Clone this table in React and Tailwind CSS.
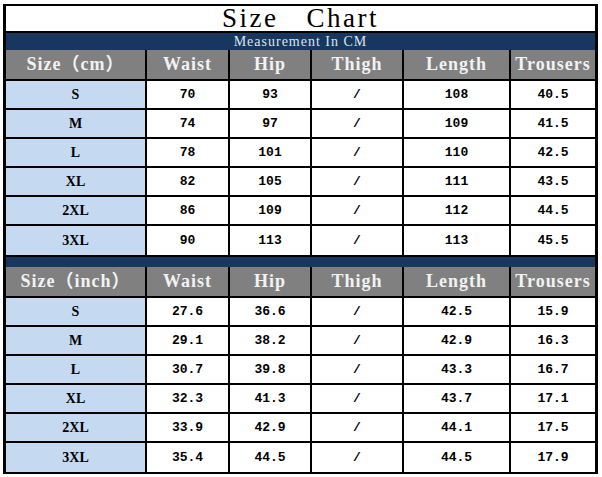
import React from "react";

const cm = [
  ["S", "70", "93", "/", "108", "40.5"],
  ["M", "74", "97", "/", "109", "41.5"],
  ["L", "78", "101", "/", "110", "42.5"],
  ["XL", "82", "105", "/", "111", "43.5"],
  ["2XL", "86", "109", "/", "112", "44.5"],
  ["3XL", "90", "113", "/", "113", "45.5"],
];

const inch = [
  ["S", "27.6", "36.6", "/", "42.5", "15.9"],
  ["M", "29.1", "38.2", "/", "42.9", "16.3"],
  ["L", "30.7", "39.8", "/", "43.3", "16.7"],
  ["XL", "32.3", "41.3", "/", "43.7", "17.1"],
  ["2XL", "33.9", "42.9", "/", "44.1", "17.5"],
  ["3XL", "35.4", "44.5", "/", "44.5", "17.9"],
];

const widths = ["w-[141px]", "w-[83px]", "w-[82px]", "w-[92px]", "w-[107px]", "w-[84px]"];

const serif = '"Liberation Serif", "Noto Sans CJK SC", serif';
const mono = '"Liberation Mono", monospace';

function HeaderRow({ first }) {
  const labels = [first, "Waist", "Hip", "Thigh", "Length", "Trousers"];
  return (
    <div className="flex h-[31px] bg-[#808080] border-b-2 border-black">
      {labels.map((l, i) => (
        <div
          key={i}
          className={`${widths[i]} flex items-center justify-center text-[18px] font-bold tracking-[1px] text-[#f2f2f2] ${
            i < 5 ? "border-r-2 border-black" : ""
          }`}
          style={{ fontFamily: serif }}
        >
          {l}
        </div>
      ))}
    </div>
  );
}

function DataRow({ row, last }) {
  return (
    <div className={`flex h-[29px] ${last ? "" : "border-b-2 border-black"}`}>
      {row.map((v, i) => (
        <div
          key={i}
          className={`${widths[i]} flex items-center justify-center font-bold text-black ${
            i === 0 ? "bg-[#c5d9f1] text-[14px]" : "bg-white text-[13px]"
          } ${i < 5 ? "border-r-2 border-black" : ""}`}
          style={{ fontFamily: i === 0 ? serif : mono }}
        >
          {v}
        </div>
      ))}
    </div>
  );
}

export default function App() {
  return (
    <div className="w-[602px] h-[477px] bg-white pt-[4px] pl-[3px]">
      <div className="w-[595px] border-l-[3px] border-r-[3px] border-t-2 border-b-2 border-black">
        {/* Title */}
        <div
          className="h-[27px] flex items-center justify-center border-b-2 border-black text-[27px] leading-none tracking-[2.5px] text-black"
          style={{ fontFamily: serif }}
        >
          <span>Size</span>
          <span className="ml-[28px]">Chart</span>
        </div>
        <div
          className="h-[17px] bg-[#17375e] flex items-center justify-center text-[14px] tracking-[1px] text-[#dde4ee] leading-none"
          style={{ fontFamily: serif }}
        >
          Measurement In CM
        </div>

        <HeaderRow first="Size（cm）" />
        {cm.map((r, i) => (
          <DataRow key={i} row={r} last={i === cm.length - 1} />
        ))}

        <div className="h-[12px] bg-[#17375e] border-t-2 border-black" />

        <HeaderRow first="Size（inch）" />
        {inch.map((r, i) => (
          <DataRow key={i} row={r} last={i === inch.length - 1} />
        ))}
      </div>
    </div>
  );
}
